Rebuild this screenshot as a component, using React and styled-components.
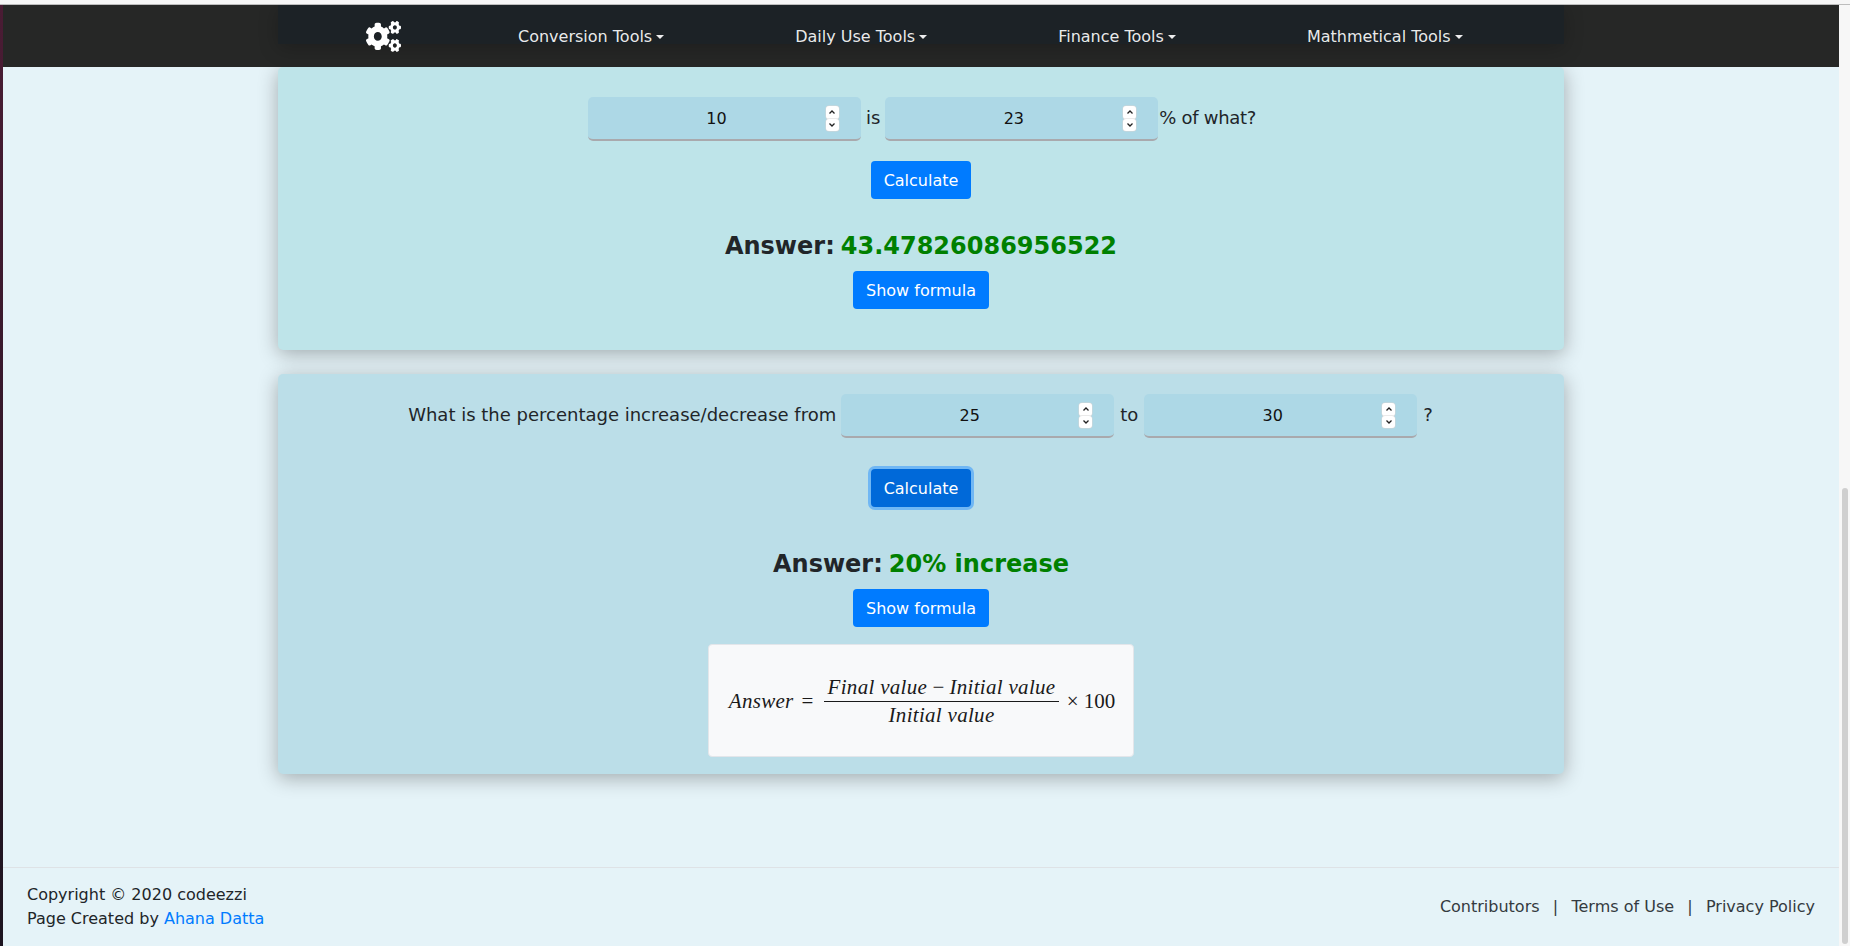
import styled, { createGlobalStyle } from 'styled-components'
import { FaCogs } from 'react-icons/fa'

const GlobalStyle = createGlobalStyle`
  html, body {
    margin: 0;
    height: 100%;
    overflow: hidden;
  }
  body {
    background: #e5f3f8;
    color: #212529;
    font-family: "DejaVu Sans", sans-serif;
    font-size: 16px;
    line-height: 24px;
  }
`

const Page = styled.div`
  height: 946px;
  display: flex;
  flex-direction: column;
`
const TopStrip = styled.div`
  height: 4px;
  background: #f6f6f6;
  border-bottom: 1px solid #bdbdbd;
`
const Body = styled.div`
  flex: 1;
  display: flex;
  min-height: 0;
`
const LeftEdge = styled.div`
  width: 3px;
  background: linear-gradient(#4a1c34, #1d1420);
`
const Main = styled.div`
  flex: 1;
  display: flex;
  flex-direction: column;
  min-width: 0;
`
const ScrollTrack = styled.div`
  width: 11px;
  background: #f7f7f7;
  display: flex;
  flex-direction: column;
  justify-content: flex-end;
  padding: 0 2px 2px 3px;
  box-sizing: border-box;
`
const ScrollThumb = styled.div`
  height: 456px;
  background: #cfcfcf;
  border-radius: 3px;
`

const Nav = styled.nav`
  position: relative;
  height: 62px;
  flex: none;
  background: #262726;
  overflow: hidden;
  display: flex;
  align-items: center;
  padding-left: 363px;
  z-index: 2;
`
const NavBand = styled.div`
  position: absolute;
  left: 275px;
  top: 0;
  width: 1286px;
  height: 39px;
  background: #1c2226;
  box-shadow: 0 4px 20px rgba(0, 0, 0, 0.22);
`
const Brand = styled.div`
  position: relative;
  width: 36px;
  margin-right: 116px;
  display: flex;
  color: #fff;
`
const BrandIcon = styled(FaCogs)`
  width: 35px;
  height: 31px;
`
const NavItems = styled.div`
  position: relative;
  display: flex;
  gap: 131px;
  padding-top: 1px;
`
const NavItem = styled.a`
  color: rgba(255, 255, 255, 0.92);
  white-space: nowrap;
  &::after {
    content: '';
    display: inline-block;
    margin-left: 4px;
    vertical-align: 3px;
    border-top: 4.8px solid;
    border-left: 4.8px solid transparent;
    border-right: 4.8px solid transparent;
  }
`

const Content = styled.main`
  flex: 1;
  display: flex;
  flex-direction: column;
  align-items: center;
  gap: 24px;
`
const Card = styled.section`
  width: 1286px;
  box-sizing: border-box;
  height: ${(p) => p.$height}px;
  padding-top: ${(p) => p.$top}px;
  background: ${(p) => p.$bg};
  border-radius: 5px;
  box-shadow: 0 4px 20px rgba(0, 0, 0, 0.3);
  display: flex;
  flex-direction: column;
  align-items: center;
`
const InputRow = styled.div`
  display: flex;
  align-items: center;
  height: 44px;
  flex: none;
`
const Label = styled.span`
  margin: ${(p) => p.$margin || '0 5px'};
  padding-bottom: 2px;
  font-size: 18px;
  letter-spacing: ${(p) => (p.$tight ? '-0.3px' : 'normal')};
  white-space: nowrap;
`
const Field = styled.div`
  position: relative;
  width: 273px;
  height: 44px;
`
const NumberInput = styled.input`
  width: 100%;
  height: 100%;
  box-sizing: border-box;
  border: none;
  border-bottom: 2px solid #a9a9ad;
  border-radius: 5px;
  background: #add8e6;
  padding: 0 16px 0 0;
  text-align: center;
  color: #111;
  font: inherit;
  outline: none;
`
const Spinner = styled.div`
  position: absolute;
  top: 9px;
  right: 22px;
  width: 13px;
  display: flex;
  flex-direction: column;
`
const SpinButton = styled.span`
  height: 12.5px;
  background: #fff;
  border-radius: 3px;
  box-shadow: 0 0 0 0.5px #d5d5d5;
  display: flex;
  align-items: center;
  justify-content: center;
  svg {
    display: block;
  }
`
const Button = styled.button`
  flex: none;
  height: 38px;
  margin-top: ${(p) => p.$mt}px;
  padding: 1px 13px 0;
  border: none;
  border-radius: 4px;
  color: #fff;
  background: ${(p) => (p.$focused ? '#0069d9' : '#007bff')};
  box-shadow: ${(p) => (p.$focused ? '0 0 0 3px rgba(38, 143, 255, 0.5)' : 'none')};
  font: inherit;
`
const AnswerLine = styled.div`
  flex: none;
  display: flex;
  gap: 6px;
  margin-top: ${(p) => p.$mt}px;
  font-size: 24px;
  line-height: 29px;
  font-weight: 700;
`
const AnswerValue = styled.span`
  color: green;
`
const FormulaBox = styled.div`
  flex: none;
  margin-top: 17px;
  width: 426px;
  height: 113px;
  box-sizing: border-box;
  padding: 1px 0 0 2px;
  background: #f8f9fa;
  border: 1px solid #e3e6ea;
  border-radius: 4px;
  display: flex;
  align-items: center;
  justify-content: center;
  gap: 8px;
  font-family: "Liberation Serif", serif;
  font-size: 21px;
  line-height: 25px;
  color: #1a1a1a;
`
const MathVar = styled.i`
  letter-spacing: 0.3px;
  white-space: nowrap;
`
const Fraction = styled.span`
  display: inline-flex;
  flex-direction: column;
  align-items: center;
  margin-left: 3px;
`
const Numerator = styled.span`
  border-bottom: 1px solid #1a1a1a;
  padding: 0 3.2px 1px;
  white-space: nowrap;
`
const Denominator = styled.span`
  padding-top: 1px;
  white-space: nowrap;
`

const Footer = styled.footer`
  flex: none;
  height: 79px;
  box-sizing: border-box;
  border-top: 1px solid #dee2e6;
  padding: 15px 24px 0;
  display: flex;
  justify-content: space-between;
`
const Credit = styled.div`
  font-size: 16px;
`
const CreditLink = styled.a`
  color: #007bff;
`
const FooterLinks = styled.div`
  display: flex;
  align-items: center;
  gap: 13.25px;
  height: 48px;
  color: #343a40;
`

const Chevron = ({ up }) => (
  <svg width="8" height="6" viewBox="0 0 8 6" fill="none" stroke="#222" strokeWidth="1.3">
    <path d={up ? 'M1.5 4.5 L4 2 L6.5 4.5' : 'M1.5 1.5 L4 4 L6.5 1.5'} />
  </svg>
)

const NumberField = ({ value }) => (
  <Field>
    <NumberInput type="text" value={value} readOnly />
    <Spinner>
      <SpinButton><Chevron up /></SpinButton>
      <SpinButton><Chevron /></SpinButton>
    </Spinner>
  </Field>
)

const navItems = ['Conversion Tools', 'Daily Use Tools', 'Finance Tools', 'Mathmetical Tools']

const App = () => {
  return (
    <Page>
      <GlobalStyle />
      <TopStrip />
      <Body>
        <LeftEdge />
        <Main>
          <Nav>
            <NavBand />
            <Brand><BrandIcon preserveAspectRatio="none" /></Brand>
            <NavItems>
              {navItems.map((item) => (
                <NavItem key={item}>{item}</NavItem>
              ))}
            </NavItems>
          </Nav>
          <Content>
            <Card $bg="#bee4e9" $height={283} $top={30}>
              <InputRow>
                <NumberField value="10" />
                <Label>is</Label>
                <NumberField value="23" />
                <Label $margin="0 -2px 0 1px" $tight>% of what?</Label>
              </InputRow>
              <Button $mt={20}>Calculate</Button>
              <AnswerLine $mt={33}>
                <span>Answer:</span>
                <AnswerValue>43.47826086956522</AnswerValue>
              </AnswerLine>
              <Button $mt={10}>Show formula</Button>
            </Card>
            <Card $bg="#bbdee8" $height={400} $top={20}>
              <InputRow>
                <Label>What is the percentage increase/decrease from</Label>
                <NumberField value="25" />
                <Label $margin="0 6px">to</Label>
                <NumberField value="30" />
                <Label $margin="0 6px 0 6px">?</Label>
              </InputRow>
              <Button $mt={31} $focused>Calculate</Button>
              <AnswerLine $mt={43}>
                <span>Answer:</span>
                <AnswerValue>20% increase</AnswerValue>
              </AnswerLine>
              <Button $mt={10}>Show formula</Button>
              <FormulaBox>
                <MathVar>Answer</MathVar>
                <span>=</span>
                <Fraction>
                  <Numerator><MathVar>Final value</MathVar> − <MathVar>Initial value</MathVar></Numerator>
                  <Denominator><MathVar>Initial value</MathVar></Denominator>
                </Fraction>
                <span>× 100</span>
              </FormulaBox>
            </Card>
          </Content>
          <Footer>
            <Credit>
              Copyright © 2020 codeezzi
              <br />
              Page Created by <CreditLink>Ahana Datta</CreditLink>
            </Credit>
            <FooterLinks>
              <span>Contributors</span>
              <span>|</span>
              <span>Terms of Use</span>
              <span>|</span>
              <span>Privacy Policy</span>
            </FooterLinks>
          </Footer>
        </Main>
        <ScrollTrack>
          <ScrollThumb />
        </ScrollTrack>
      </Body>
    </Page>
  )
}

export default App
